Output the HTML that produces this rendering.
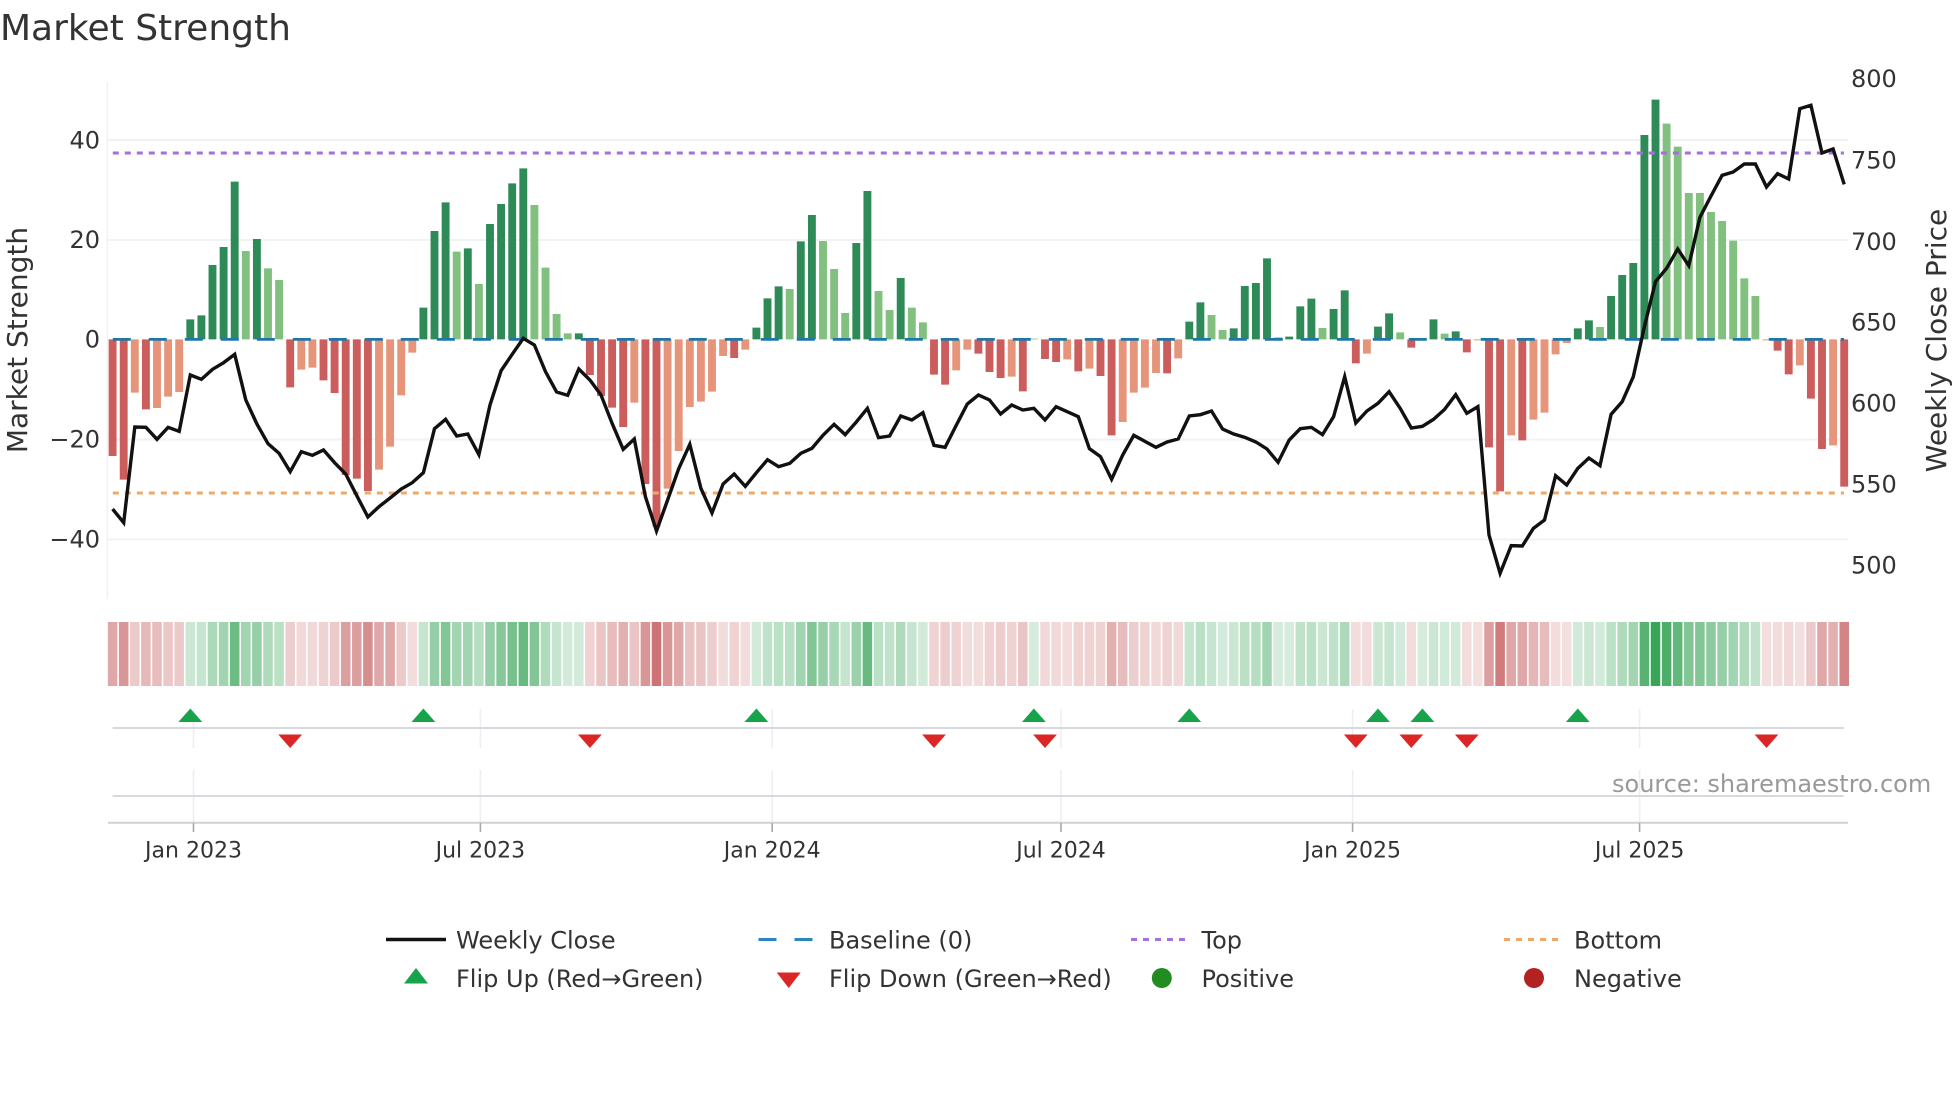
<!DOCTYPE html>
<html><head><meta charset="utf-8"><title>Market Strength</title>
<style>html,body{margin:0;padding:0;background:#fff}svg{display:block}text{font-family:"DejaVu Sans","Liberation Sans",sans-serif;fill:#333}</style></head>
<body>
<svg width="1960" height="1102" viewBox="0 0 1960 1102" xmlns="http://www.w3.org/2000/svg">
<rect width="1960" height="1102" fill="#fff"/>
<!-- grid -->
<g stroke="#f1f2f4" stroke-width="2" fill="none">
<path d="M108 140H1848M108 240H1848M108 439.5H1848M108 539.5H1848"/>
<path d="M107.3 82V599" stroke-width="1.5"/>
<path d="M193.5 709V748M193.5 770V822M480.4 709V748M480.4 770V822M772.2 709V748M772.2 770V822M1061 709V748M1061 770V822M1352.6 709V748M1352.6 770V822M1639.6 709V748M1639.6 770V822" stroke="#eceef2" stroke-width="1.5"/>
</g>
<!-- positive bars, upper part -->
<g transform="translate(112.6,0) scale(11.1,.33333)" stroke-width=".71" fill="none">
<path stroke="#2e8b57" d="M7 1018V958M8 1018V946M9 1018V795M10 1018V741M11 1018V545M13 1018V717M28 1018V923M29 1018V693M30 1018V607M32 1018V745M34 1018V672M35 1018V612M36 1018V550M37 1018V505M42 1018V1000"/>
<path stroke="#81c07f" d="M12 1018V753M14 1018V805M15 1018V840M31 1018V755M33 1018V852M38 1018V615M39 1018V803M40 1018V942M41 1018V1000"/>
</g>
<g transform="translate(112.6,60) scale(11.1,.33333)" stroke-width=".71" fill="none">
<path stroke="#2e8b57" d="M58 838V803M59 838V715M60 838V679M62 838V544M63 838V465M67 838V549M68 838V393M71 838V654M97 838V785M98 838V727M101 838V805M102 838V678M103 838V669M104 838V595M106 838V830M107 838V739M108 838V716M110 838V747M111 838V691M114 838V800M115 838V760M118 838V835M119 838V778M121 838V814M132 838V805M133 838V781M135 838V708M136 838V645M137 838V609M138 838V225M139 838V119"/>
<path stroke="#81c07f" d="M61 838V687M64 838V543M65 838V627M66 838V759M69 838V693M70 838V750M72 838V743M73 838V787M83 838V836M99 838V765M100 838V810M105 838V832M109 838V804M116 838V817M120 838V821M134 838V801M140 838V191M141 838V260M142 838V399M143 838V399M144 838V456M145 838V483M146 838V542M147 838V655M148 838V708"/>
</g>
<!-- negative bars -->
<g transform="translate(112.6,330) scale(11.1,.33333)" stroke-width=".71" fill="none">
<path stroke="#cb5d5d" d="M0 28V378M1 28V449M3 28V238M16 28V172M19 28V151M20 28V189M21 28V435M22 28V446M23 28V483M43 28V135M44 28V198M45 28V233M46 28V291M48 28V462M49 28V590M56 28V84M74 28V134M75 28V164M78 28V71M79 28V126M80 28V144M82 28V184M84 28V87M85 28V96M87 28V124M89 28V138M90 28V316M95 28V130M112 28V100M117 28V53M122 28V67M124 28V352M125 28V484M127 28V331M150 28V62M151 28V133M153 28V206M154 28V357M156 28V470"/>
<path stroke="#e6957a" d="M2 28V188M4 28V234M5 28V200M6 28V186M17 28V119M18 28V113M24 28V419M25 28V350M26 28V196M27 28V68M47 28V218M50 28V476M51 28V363M52 28V231M53 28V215M54 28V185M55 28V78M57 28V59M76 28V121M77 28V59M81 28V140M86 28V88M88 28V116M91 28V276M92 28V188M93 28V173M94 28V129M96 28V85M113 28V71M123 28V31M126 28V316M128 28V269M129 28V248M130 28V73M131 28V39M149 28V31M152 28V106M155 28V346"/>
</g>
<!-- reference lines -->
<path d="M112.8 339.4H1844" stroke="#1f77a8" stroke-width="2.8" stroke-dasharray="18 18" fill="none"/>
<path d="M112.8 153H1844" stroke="#a56fdc" stroke-width="3" stroke-dasharray="6 6" fill="none"/>
<path d="M112.8 493H1844" stroke="#f0a866" stroke-width="3" stroke-dasharray="6 6" fill="none"/>
<!-- weekly close -->
<g transform="translate(112.6,330) scale(11.1,.33333)">
<polyline fill="none" stroke="#111" stroke-width="3.4" vector-effect="non-scaling-stroke" stroke-linejoin="miter" stroke-miterlimit="6" points="0,537 1,578 2,291 3,292 4,328 5,292 6,304 7,135 8,148 9,118 10,98 11,73 12,210 13,282 14,341 15,370 16,425 17,365 18,376 19,360 20,398 21,432 22,497 23,561 24,530 25,504 26,477 27,458 28,428 29,296 30,268 31,318 32,312 33,374 34,225 35,122 36,73 37,25 38,45 39,125 40,186 41,196 42,117 43,150 44,195 45,280 46,358 47,327 48,500 49,603 50,510 51,416 52,343 53,475 54,549 55,462 56,432 57,469 58,428 59,389 60,410 61,400 62,370 63,355 64,316 65,283 66,314 67,276 68,235 69,323 70,318 71,258 72,270 73,248 74,346 75,352 76,286 77,222 78,195 79,210 80,252 81,225 82,240 83,235 84,270 85,230 86,245 87,260 88,356 89,380 90,448 91,375 92,316 93,334 94,352 95,336 96,327 97,258 98,254 99,243 100,297 101,312 102,322 103,336 104,357 105,397 106,330 107,296 108,292 109,314 110,260 111,140 112,279 113,243 114,220 115,185 116,235 117,294 118,289 119,268 120,238 121,194 122,250 123,230 124,615 125,730 126,647 127,648 128,595 129,570 130,437 131,465 132,415 133,384 134,407 135,253 136,215 137,140 138,-10 139,-145 140,-185 141,-243 142,-193 143,-338 144,-402 145,-464 146,-474 147,-498 148,-498 149,-429 150,-469 151,-453 152,-664 153,-674 154,-531 155,-543 156,-437"/>
</g>
<!-- heat strip -->
<g transform="translate(112.6,622) scale(11.1,64)" stroke-width=".86" fill="none">
<g stroke="#c05050">
<path d="M0 0V1" opacity=".5"/><path d="M1 0V1" opacity=".6"/><path d="M2 0V1" opacity=".3"/><path d="M3 0V1" opacity=".4"/><path d="M4 0V1" opacity=".38"/><path d="M5 0V1" opacity=".32"/><path d="M6 0V1" opacity=".3"/>
<path d="M16 0V1" opacity=".28"/><path d="M17 0V1" opacity=".22"/><path d="M18 0V1" opacity=".22"/><path d="M19 0V1" opacity=".26"/><path d="M20 0V1" opacity=".3"/><path d="M21 0V1" opacity=".55"/><path d="M22 0V1" opacity=".55"/><path d="M23 0V1" opacity=".65"/><path d="M24 0V1" opacity=".5"/><path d="M25 0V1" opacity=".5"/><path d="M26 0V1" opacity=".3"/><path d="M27 0V1" opacity=".2"/>
<path d="M43 0V1" opacity=".25"/><path d="M44 0V1" opacity=".33"/><path d="M45 0V1" opacity=".38"/><path d="M46 0V1" opacity=".45"/><path d="M47 0V1" opacity=".33"/><path d="M48 0V1" opacity=".6"/><path d="M49 0V1" opacity=".8"/><path d="M50 0V1" opacity=".6"/><path d="M51 0V1" opacity=".5"/><path d="M52 0V1" opacity=".35"/><path d="M53 0V1" opacity=".33"/><path d="M54 0V1" opacity=".28"/><path d="M55 0V1" opacity=".2"/><path d="M56 0V1" opacity=".25"/><path d="M57 0V1" opacity=".2"/>
<path d="M74 0V1" opacity=".25"/><path d="M75 0V1" opacity=".28"/><path d="M76 0V1" opacity=".25"/><path d="M77 0V1" opacity=".2"/><path d="M78 0V1" opacity=".2"/><path d="M79 0V1" opacity=".25"/><path d="M80 0V1" opacity=".28"/><path d="M81 0V1" opacity=".25"/><path d="M82 0V1" opacity=".33"/>
<path d="M84 0V1" opacity=".22"/><path d="M85 0V1" opacity=".22"/><path d="M86 0V1" opacity=".2"/><path d="M87 0V1" opacity=".25"/><path d="M88 0V1" opacity=".25"/><path d="M89 0V1" opacity=".25"/><path d="M90 0V1" opacity=".45"/><path d="M91 0V1" opacity=".38"/><path d="M92 0V1" opacity=".28"/><path d="M93 0V1" opacity=".25"/><path d="M94 0V1" opacity=".22"/><path d="M95 0V1" opacity=".25"/><path d="M96 0V1" opacity=".22"/>
<path d="M112 0V1" opacity=".2"/><path d="M113 0V1" opacity=".2"/><path d="M117 0V1" opacity=".2"/><path d="M122 0V1" opacity=".2"/><path d="M123 0V1" opacity=".18"/>
<path d="M124 0V1" opacity=".55"/><path d="M125 0V1" opacity=".75"/><path d="M126 0V1" opacity=".5"/><path d="M127 0V1" opacity=".5"/><path d="M128 0V1" opacity=".42"/><path d="M129 0V1" opacity=".38"/><path d="M130 0V1" opacity=".2"/><path d="M131 0V1" opacity=".18"/>
<path d="M149 0V1" opacity=".18"/><path d="M150 0V1" opacity=".2"/><path d="M151 0V1" opacity=".22"/><path d="M152 0V1" opacity=".18"/><path d="M153 0V1" opacity=".3"/><path d="M154 0V1" opacity=".5"/><path d="M155 0V1" opacity=".45"/><path d="M156 0V1" opacity=".7"/>
</g>
<g stroke="#2ea050">
<path d="M7 0V1" opacity=".25"/><path d="M8 0V1" opacity=".27"/><path d="M9 0V1" opacity=".4"/><path d="M10 0V1" opacity=".45"/><path d="M11 0V1" opacity=".7"/><path d="M12 0V1" opacity=".45"/><path d="M13 0V1" opacity=".5"/><path d="M14 0V1" opacity=".38"/><path d="M15 0V1" opacity=".33"/>
<path d="M28 0V1" opacity=".28"/><path d="M29 0V1" opacity=".5"/><path d="M30 0V1" opacity=".6"/><path d="M31 0V1" opacity=".45"/><path d="M32 0V1" opacity=".45"/><path d="M33 0V1" opacity=".35"/><path d="M34 0V1" opacity=".5"/><path d="M35 0V1" opacity=".58"/><path d="M36 0V1" opacity=".65"/><path d="M37 0V1" opacity=".72"/><path d="M38 0V1" opacity=".6"/><path d="M39 0V1" opacity=".38"/><path d="M40 0V1" opacity=".28"/><path d="M41 0V1" opacity=".22"/><path d="M42 0V1" opacity=".22"/>
<path d="M58 0V1" opacity=".22"/><path d="M59 0V1" opacity=".3"/><path d="M60 0V1" opacity=".33"/><path d="M61 0V1" opacity=".33"/><path d="M62 0V1" opacity=".45"/><path d="M63 0V1" opacity=".6"/><path d="M64 0V1" opacity=".5"/><path d="M65 0V1" opacity=".42"/><path d="M66 0V1" opacity=".28"/><path d="M67 0V1" opacity=".48"/><path d="M68 0V1" opacity=".72"/><path d="M69 0V1" opacity=".33"/><path d="M70 0V1" opacity=".3"/><path d="M71 0V1" opacity=".38"/><path d="M72 0V1" opacity=".27"/><path d="M73 0V1" opacity=".22"/>
<path d="M83 0V1" opacity=".2"/>
<path d="M97 0V1" opacity=".28"/><path d="M98 0V1" opacity=".33"/><path d="M99 0V1" opacity=".27"/><path d="M100 0V1" opacity=".22"/><path d="M101 0V1" opacity=".25"/><path d="M102 0V1" opacity=".33"/><path d="M103 0V1" opacity=".35"/><path d="M104 0V1" opacity=".45"/><path d="M105 0V1" opacity=".2"/><path d="M106 0V1" opacity=".2"/><path d="M107 0V1" opacity=".3"/><path d="M108 0V1" opacity=".33"/><path d="M109 0V1" opacity=".25"/><path d="M110 0V1" opacity=".3"/><path d="M111 0V1" opacity=".4"/>
<path d="M114 0V1" opacity=".25"/><path d="M115 0V1" opacity=".27"/><path d="M116 0V1" opacity=".22"/><path d="M118 0V1" opacity=".2"/><path d="M119 0V1" opacity=".25"/><path d="M120 0V1" opacity=".22"/><path d="M121 0V1" opacity=".22"/>
<path d="M132 0V1" opacity=".22"/><path d="M133 0V1" opacity=".25"/><path d="M134 0V1" opacity=".22"/><path d="M135 0V1" opacity=".33"/><path d="M136 0V1" opacity=".38"/><path d="M137 0V1" opacity=".45"/><path d="M138 0V1" opacity=".8"/><path d="M139 0V1" opacity=".95"/><path d="M140 0V1" opacity=".85"/><path d="M141 0V1" opacity=".75"/><path d="M142 0V1" opacity=".6"/><path d="M143 0V1" opacity=".6"/><path d="M144 0V1" opacity=".55"/><path d="M145 0V1" opacity=".5"/><path d="M146 0V1" opacity=".45"/><path d="M147 0V1" opacity=".38"/><path d="M148 0V1" opacity=".3"/>
</g>
</g>
<!-- marker rails and axis -->
<path d="M112.6 728H1843.7M112.6 796H1843.7" stroke="#d6d9de" stroke-width="2" fill="none"/>
<path d="M108 822.7H1848" stroke="#cfd1d4" stroke-width="2" fill="none"/>
<path d="M193.5 823V832M480.4 823V832M772.2 823V832M1061 823V832M1352.6 823V832M1639.6 823V832" stroke="#a8a8a8" stroke-width="1.6" fill="none"/>
<!-- flip markers -->
<g fill="#16a34a">
<path d="M190.3 708.5L202.2 722H178.4Z"/><path d="M423.4 708.5L435.3 722H411.5Z"/><path d="M756.4 708.5L768.3 722H744.5Z"/><path d="M1033.9 708.5L1045.8 722H1022Z"/><path d="M1189.3 708.5L1201.2 722H1177.4Z"/><path d="M1378 708.5L1389.9 722H1366.1Z"/><path d="M1422.4 708.5L1434.3 722H1410.5Z"/><path d="M1577.8 708.5L1589.7 722H1565.9Z"/>
</g>
<g fill="#dc2626">
<path d="M290.2 748L278.3 734.5H302.1Z"/><path d="M589.9 748L578 734.5H601.8Z"/><path d="M934 748L922.1 734.5H945.9Z"/><path d="M1045 748L1033.1 734.5H1056.9Z"/><path d="M1355.8 748L1343.9 734.5H1367.7Z"/><path d="M1411.3 748L1399.4 734.5H1423.2Z"/><path d="M1466.8 748L1454.9 734.5H1478.7Z"/><path d="M1766.5 748L1754.6 734.5H1778.4Z"/>
</g>
<!-- title -->
<text x="0" y="40" font-size="36">Market Strength</text>
<!-- left ticks -->
<g font-size="24" text-anchor="end">
<text x="100" y="148.5">40</text><text x="100" y="248">20</text><text x="100" y="347.5">0</text><text x="100" y="447.5">−20</text><text x="100" y="547.5">−40</text>
</g>
<!-- right ticks -->
<g font-size="24">
<text x="1851" y="87">800</text><text x="1851" y="168.5">750</text><text x="1851" y="250">700</text><text x="1851" y="330.5">650</text><text x="1851" y="411.5">600</text><text x="1851" y="492.5">550</text><text x="1851" y="573.5">500</text>
</g>
<!-- axis titles -->
<text transform="translate(27,340) rotate(-90)" font-size="28" text-anchor="middle">Market Strength</text>
<text transform="translate(1946,340.5) rotate(-90)" font-size="28" text-anchor="middle">Weekly Close Price</text>
<!-- x ticks -->
<g font-size="22" text-anchor="middle">
<text x="193.5" y="857.5">Jan 2023</text><text x="480.4" y="857.5">Jul 2023</text><text x="772.2" y="857.5">Jan 2024</text><text x="1061" y="857.5">Jul 2024</text><text x="1352.6" y="857.5">Jan 2025</text><text x="1639.6" y="857.5">Jul 2025</text>
</g>
<text x="1612" y="792" font-size="24" style="fill:#999">source: sharemaestro.com</text>
<!-- legend -->
<path d="M386 939.5H446" stroke="#111" stroke-width="3.6" fill="none"/>
<path d="M758.5 939.5H813" stroke="#2f86bb" stroke-width="3" stroke-dasharray="18 18" fill="none"/>
<path d="M1131 939.5H1186" stroke="#a56fdc" stroke-width="3" stroke-dasharray="6 6" fill="none"/>
<path d="M1504 939.5H1559" stroke="#f0a866" stroke-width="3" stroke-dasharray="6 6" fill="none"/>
<path d="M416 968L428 983.5H404Z" fill="#16a34a"/>
<path d="M788.7 988L776.7 972.5H800.7Z" fill="#dc2626"/>
<ellipse cx="1161.8" cy="978" rx="10" ry="10" fill="#228b22"/>
<ellipse cx="1534" cy="978" rx="10" ry="10" fill="#b22222"/>
<g font-size="24">
<text x="456" y="948.5">Weekly Close</text><text x="829" y="948.5">Baseline (0)</text><text x="1201.5" y="948.5">Top</text><text x="1574" y="948.5">Bottom</text>
<text x="456" y="987">Flip Up (Red→Green)</text><text x="829" y="987">Flip Down (Green→Red)</text><text x="1201.5" y="987">Positive</text><text x="1574" y="987">Negative</text>
</g>
</svg>
</body></html>
